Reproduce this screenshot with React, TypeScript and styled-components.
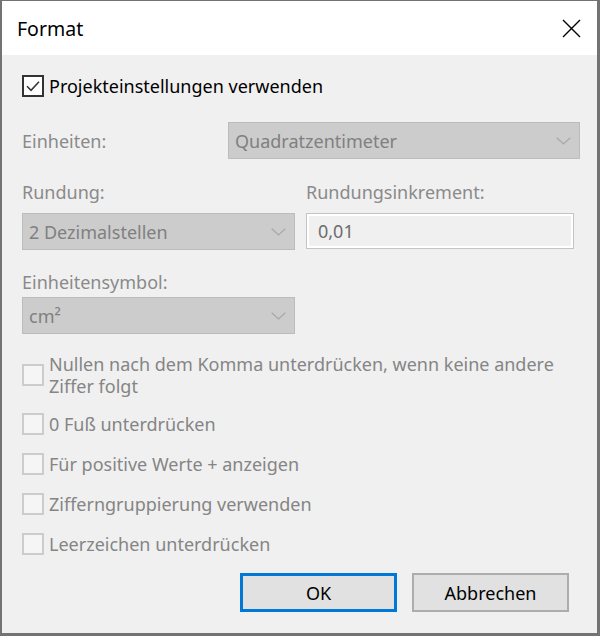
import React from 'react';
import styled, { createGlobalStyle } from 'styled-components';

const Global = createGlobalStyle`
  html, body { margin: 0; padding: 0; background: #ffffff; }
  body { font-family: "Noto Sans", "Segoe UI", sans-serif; }
`;

const FONT = `"Noto Sans", "Segoe UI", sans-serif`;

const Window = styled.div`
  width: 600px;
  height: 636px;
  box-sizing: border-box;
  border-style: solid;
  border-color: #737373;
  border-width: 1px 3px 3px 2px;
  display: flex;
  flex-direction: column;
  font-family: ${FONT};
  font-size: 18px;
`;

const TitleBar = styled.div`
  height: 54px;
  background: #ffffff;
  display: flex;
  align-items: center;
  justify-content: space-between;
  padding: 0 16px 0 15px;
  flex-shrink: 0;
`;

const Title = styled.span`
  color: #000000;
  font-size: 19.5px;
`;

const Close = styled.span`
  width: 20px;
  height: 20px;
  display: flex;
  align-items: center;
  justify-content: center;
`;

const Body = styled.div`
  flex: 1;
  background: #f0f0f0;
  padding: 20px 17px 0 20px;
  display: flex;
  flex-direction: column;
`;

const CheckRow = styled.div<{ $mt?: number }>`
  display: flex;
  align-items: center;
  gap: 5px;
  margin-top: ${(p) => p.$mt ?? 0}px;
`;

const Box = styled.span<{ $disabled?: boolean }>`
  width: 22px;
  height: 22px;
  box-sizing: border-box;
  flex-shrink: 0;
  border: 2px solid ${(p) => (p.$disabled ? '#cccccc' : '#333333')};
  background: ${(p) => (p.$disabled ? '#f5f5f5' : '#ffffff')};
  display: flex;
  align-items: center;
  justify-content: center;
`;

const CheckLabel = styled.span<{ $disabled?: boolean }>`
  color: ${(p) => (p.$disabled ? '#858585' : '#000000')};
  line-height: 22px;
  max-width: 510px;
`;

const UnitRow = styled.div<{ $mt?: number }>`
  display: flex;
  align-items: center;
  justify-content: space-between;
  margin-top: ${(p) => p.$mt ?? 0}px;
`;

const Label = styled.span`
  color: #8a8a8a;
  line-height: 24px;
  display: block;
`;

const TwoCol = styled.div<{ $mt?: number }>`
  display: grid;
  grid-template-columns: 273px 268px;
  column-gap: 11px;
  margin-top: ${(p) => p.$mt ?? 0}px;
`;

const Combo = styled.div<{ $w: number; $mt?: number }>`
  width: ${(p) => p.$w}px;
  height: 37px;
  box-sizing: border-box;
  background: #cccccc;
  border: 1px solid #bcbcbc;
  display: flex;
  align-items: center;
  justify-content: space-between;
  padding: 0 8px 0 6px;
  color: #808080;
  margin-top: ${(p) => p.$mt ?? 0}px;
`;

const TextBox = styled.div`
  width: 268px;
  height: 36px;
  box-sizing: border-box;
  background: #f0f0f0;
  border: 1px solid #c4c4c4;
  box-shadow: inset 0 0 0 2px #ffffff;
  display: flex;
  align-items: center;
  padding-left: 11px;
  color: #6d6d6d;
`;

const Block = styled.div<{ $mt?: number }>`
  margin-top: ${(p) => p.$mt ?? 0}px;
`;

const Buttons = styled.div`
  display: flex;
  justify-content: flex-end;
  gap: 15px;
  margin-top: 18px;
  padding-right: 11px;
`;

const Button = styled.div<{ $default?: boolean }>`
  width: 157px;
  height: 39px;
  box-sizing: border-box;
  background: #e1e1e1;
  border: ${(p) => (p.$default ? '3px solid #0078d7' : '2px solid #adadad')};
  display: flex;
  align-items: center;
  justify-content: center;
  color: #000000;
`;

const Chevron = () => (
  <svg width="15" height="8" viewBox="0 0 15 8">
    <path d="M0.7 0.7 L7.5 7 L14.3 0.7" fill="none" stroke="#a8a8a8" strokeWidth="1.2" />
  </svg>
);

const CheckMark = () => (
  <svg width="16" height="16" viewBox="0 0 16 16">
    <path d="M2 8.3 L6 12.3 L14 3.8" fill="none" stroke="#333333" strokeWidth="1.5" />
  </svg>
);

const CloseIcon = () => (
  <svg width="19" height="19" viewBox="0 0 19 19">
    <path d="M1 1 L18 18 M18 1 L1 18" fill="none" stroke="#000000" strokeWidth="1.4" />
  </svg>
);

const Check: React.FC<{ label: string; checked?: boolean; disabled?: boolean; mt?: number }> = ({
  label,
  checked,
  disabled,
  mt,
}) => (
  <CheckRow $mt={mt}>
    <Box $disabled={disabled}>{checked && <CheckMark />}</Box>
    <CheckLabel $disabled={disabled}>{label}</CheckLabel>
  </CheckRow>
);

export default function App() {
  return (
    <>
      <Global />
      <Window>
        <TitleBar>
          <Title>Format</Title>
          <Close>
            <CloseIcon />
          </Close>
        </TitleBar>
        <Body>
          <Check label="Projekteinstellungen verwenden" checked />
          <UnitRow $mt={25}>
            <Label>Einheiten:</Label>
            <Combo $w={352}>
              <span>Quadratzentimeter</span>
              <Chevron />
            </Combo>
          </UnitRow>
          <TwoCol $mt={21}>
            <Label>Rundung:</Label>
            <Label>Rundungsinkrement:</Label>
          </TwoCol>
          <TwoCol $mt={9}>
            <Combo $w={273}>
              <span>2 Dezimalstellen</span>
              <Chevron />
            </Combo>
            <TextBox>0,01</TextBox>
          </TwoCol>
          <Block $mt={20}>
            <Label>Einheitensymbol:</Label>
          </Block>
          <Combo $w={273} $mt={3}>
            <span>cm²</span>
            <Chevron />
          </Combo>
          <Check mt={19} disabled label="Nullen nach dem Komma unterdrücken, wenn keine andere Ziffer folgt" />
          <Check mt={16} disabled label="0 Fuß unterdrücken" />
          <Check mt={18} disabled label="Für positive Werte + anzeigen" />
          <Check mt={18} disabled label="Zifferngruppierung verwenden" />
          <Check mt={18} disabled label="Leerzeichen unterdrücken" />
          <Buttons>
            <Button $default>OK</Button>
            <Button>Abbrechen</Button>
          </Buttons>
        </Body>
      </Window>
    </>
  );
}
